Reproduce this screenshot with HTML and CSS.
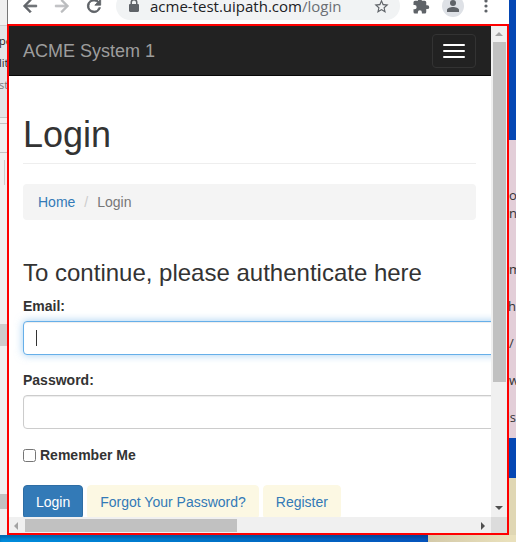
FILE: index.html
```html
<!DOCTYPE html>
<html lang="en">
<head>
<meta charset="utf-8">
<title>ACME System 1 - Login</title>
<link rel="stylesheet" href="styles.css">
</head>
<body>
<div class="desktop">
  <aside class="behind-left">
    <div class="ribbon"><p class="dark">pe</p><p class="dark">lit</p><p>st</p></div>
    <div class="bar"></div>
    <div class="pane tools"></div>
    <div class="pane tall"><i></i></div>
    <div class="thumb"></div>
    <div class="pane lower"></div>
    <div class="thumb small"></div>
    <div class="pane rest"></div>
  </aside>

  <div class="window">
    <header class="toolbar">
      <button class="tool bold" aria-label="Back"><svg width="20" height="20" viewBox="0 0 24 24"><path d="M20 11H7.8l5.600-5.600L12 4l-8 8 8 8 1.400-1.400L7.800 13H20z"/></svg></button>
      <button class="tool bold faded" aria-label="Forward"><svg width="20" height="20" viewBox="0 0 24 24"><path d="M4 11h12.200l-5.600-5.600L12 4l8 8-8 8-1.400-1.400 5.600-5.600H4z"/></svg></button>
      <button class="tool bold" aria-label="Reload"><svg width="20" height="20" viewBox="0 0 24 24"><path d="M17.650 6.350A8 8 0 1 0 19.730 14h-2.080A6 6 0 1 1 12 6c1.660 0 3.140.69 4.220 1.780L13 11h7V4z"/></svg></button>
      <div class="address">
        <svg width="12" height="16" viewBox="0 0 12 16"><path d="M2.500 6V4.500a3.500 3.500 0 0 1 7 0V6h.3c.7 0 1.200.5 1.200 1.200v5.600c0 .7-.5 1.200-1.200 1.200H2.200C1.500 14 1 13.500 1 12.800V7.200C1 6.500 1.500 6 2.200 6zM4 6h4V4.500a2 2 0 0 0-4 0z"/></svg>
        <span class="url">acme-test.uipath.com<span>/login</span></span>
        <button class="tool" aria-label="Bookmark"><svg width="17" height="17" viewBox="0 0 24 24"><path d="M22 9.240l-7.190-.62L12 2 9.190 8.630 2 9.240l5.460 4.730L5.820 21 12 17.270 18.180 21l-1.630-7.030zM12 15.400l-3.760 2.270 1-4.280-3.320-2.880 4.380-.38L12 6.100l1.710 4.040 4.380.38-3.320 2.880 1 4.280z"/></svg></button>
      </div>
      <button class="tool" aria-label="Extensions"><svg width="18" height="18" viewBox="0 0 24 24"><path d="M20.500 11H19V7a2 2 0 0 0-2-2h-4V3.500a2.500 2.500 0 0 0-5 0V5H4a2 2 0 0 0-2 2v3.800h1.500a2.700 2.700 0 0 1 0 5.400H2V20a2 2 0 0 0 2 2h3.800v-1.500a2.700 2.700 0 0 1 5.400 0V22H17a2 2 0 0 0 2-2v-4h1.500a2.500 2.500 0 0 0 0-5z"/></svg></button>
      <button class="tool" aria-label="Profile"><svg width="22" height="22" viewBox="0 0 22 22"><circle cx="11" cy="11" r="11" fill="#dee1e6"/><circle cx="11" cy="8" r="3"/><path d="M5 17v-2c0-2 3.500-3 6-3s6 1 6 3v2z"/></svg></button>
      <button class="tool" aria-label="Menu"><svg width="20" height="20" viewBox="0 0 20 20"><circle cx="10" cy="5" r="1.600"/><circle cx="10" cy="10" r="1.600"/><circle cx="10" cy="15" r="1.600"/></svg></button>
    </header>

    <div class="viewport">
      <div class="page">
        <nav class="navbar">
          <a class="brand" href="#">ACME System 1</a>
          <button class="toggle" aria-label="Toggle navigation"><i></i><i></i><i></i></button>
        </nav>
        <main class="container">
          <h1>Login</h1>
          <ol class="breadcrumb"><li><a href="#">Home</a></li><li>Login</li></ol>
          <h3>To continue, please authenticate here</h3>
          <form>
            <div class="group">
              <label for="email">Email:</label>
              <input class="field focused" id="email" type="email">
            </div>
            <div class="group">
              <label for="password">Password:</label>
              <input class="field" id="password" type="password">
            </div>
            <div class="remember"><input id="remember" type="checkbox"><label for="remember">Remember Me</label></div>
            <div class="actions">
              <button class="btn primary" type="button">Login</button>
              <a class="btn" href="#">Forgot Your Password?</a>
              <a class="btn" href="#">Register</a>
            </div>
          </form>
        </main>
      </div>
      <div class="scroll vertical">
        <svg width="16" height="16" viewBox="0 0 16 16" fill="#a3a3a3"><path d="M4 10l4-4 4 4z"/></svg>
        <div class="grip"></div><div class="track"></div>
        <svg width="16" height="16" viewBox="0 0 16 16" fill="#505050"><path d="M4 5h8l-4 4z"/></svg>
      </div>
      <div class="scroll horizontal">
        <svg width="16" height="16" viewBox="0 0 16 16" fill="#a3a3a3"><path d="M9 5v8L5 9z"/></svg>
        <div class="grip"></div><div class="track"></div>
        <svg width="16" height="16" viewBox="0 0 16 16" fill="#505050"><path d="M6 5v8l4-4z"/></svg>
      </div>
      <div class="corner"></div>
    </div>
  </div>

  <aside class="behind-right">
    <div class="blue top"></div>
    <div class="note"><p>o</p><p>n</p><p class="spaced">m</p><p class="near end">sh</p><p class="near">/</p><p class="near">w</p><p class="near end">ds</p></div>
    <div class="blue mid"></div>
    <div class="cream"></div>
  </aside>
  <div class="floor"><div class="water"></div><div class="cream"></div></div>
</div>
</body>
</html>
```
FILE: styles.css
```css
* { box-sizing: border-box; }

body {
  margin: 0;
  background: #fff;
  color: #333;
  font: 14px/20px "Liberation Sans", Arial, sans-serif;
}

h1, h3, p, ol { margin: 0; padding: 0; }
button { margin: 0; padding: 0; border: 0; background: none; font: inherit; }
a { color: #337ab7; text-decoration: none; }
svg { display: block; flex: none; }

.desktop {
  display: grid;
  grid-template-columns: 7px minmax(0, 1fr) 7px;
  grid-template-rows: minmax(0, 1fr) 7px;
  height: calc(100vh - 17px);
  overflow: hidden;
}

/* Windows behind the browser */
.behind-left, .behind-right {
  display: flex;
  flex-direction: column;
  min-width: 0;
  overflow: hidden;
  font: 13px/18px "Open Sans", sans-serif;
}
.behind-left { background: #f0f0f0; }
.ribbon {
  height: 117px;
  padding-top: 32px;
  background: linear-gradient(#f0f0f0 25px, #ccc 25px, #ccc 26px, #e3e4e6 26px);
  color: #777;
  font-size: 11px;
}
.ribbon p { height: 22px; margin-left: -1px; }
.ribbon .dark { color: #222; }
.bar { height: 7px; border: solid #c4c4c4; border-width: 1px 0; }
.tools { height: 29px; border-bottom: 1px solid #c4c4c4; }
.tall { height: 171px; padding: 7px 0 0 4px; }
.tall i { display: block; width: 1px; height: 25px; background: #ccc; }
.thumb { height: 22px; background: #cdcdcd; }
.lower { height: 148px; }
.thumb.small { height: 15px; background: #c1c1c1; }
.rest { flex: 1; }

.blue { background: #0547b4; }
.blue.top { height: 140px; }
.blue.mid { height: 40px; }
.note { height: 298px; padding-top: 46px; background: #e3ced8; color: #333; }
.note p { display: flex; height: 18px; }
.note .spaced { margin-top: 38px; }
.note .near { margin-top: 19px; }
.note .end { justify-content: flex-end; }
.cream { flex: 1; background: linear-gradient(90deg, #d3c9a9, #e9e0bb 80px); }
.floor { grid-column: 1 / -1; display: flex; }
.water { width: 83%; background: linear-gradient(90deg, #008ddd, #0073c8 50%, #0554bd); box-shadow: inset 0 3px 3px rgba(0, 30, 80, .3); }
.behind-right .cream { background: #e0d7b4; }

/* Browser window */
.window { display: flex; flex-direction: column; min-width: 0; min-height: 0; }
.toolbar {
  display: flex;
  align-items: center;
  flex: none;
  gap: 12px;
  height: 36px;
  margin-top: -12px;
  padding: 0 13px 0 12px;
  border-left: 1px solid #777;
  background: #fff;
}
.tool { fill: #5f6368; }
.tool.bold { stroke: #5f6368; stroke-width: 1px; }
.tool.faded { fill: #babcbe; stroke: #babcbe; }
.address {
  display: flex;
  flex: 1;
  align-items: center;
  gap: 10px;
  min-width: 0;
  height: 28px;
  padding: 0 10px 0 12px;
  border-radius: 14px;
  background: #f1f3f4;
  fill: #5f6368;
}
.url {
  flex: 1;
  color: #202124;
  font: 15px/20px "Open Sans", sans-serif;
  white-space: nowrap;
}
.url span { color: #6b6f74; }

.viewport {
  display: grid;
  grid-template-columns: minmax(0, 1fr) 16px;
  grid-template-rows: minmax(0, 1fr) 16px;
  flex: 1;
  min-height: 0;
  border: 2px solid #f00;
  background: #fff;
}
.page { overflow: hidden; }
.scroll { display: flex; background: #f0f0f0; }
.vertical { flex-direction: column; }
.vertical .grip { flex: 74; margin: 0 1px 0 2px; }
.vertical .track { flex: 26; }
.horizontal .grip { flex: 47; margin: 2px 0 1px; }
.horizontal .track { flex: 53; }
.grip { background: #c1c1c1; }
.corner { background: #dcdcdc; }

/* Login page */
.navbar {
  display: flex;
  align-items: center;
  justify-content: space-between;
  height: 50px;
  padding: 0 15px 0 14px;
  border-bottom: 1px solid #080808;
  background: #222;
}
.brand { color: #9d9d9d; font-size: 18px; }
.toggle {
  display: flex;
  flex-direction: column;
  gap: 4px;
  padding: 9px 10px;
  border: 1px solid #333;
  border-radius: 4px;
}
.toggle i { width: 22px; height: 2px; border-radius: 1px; background: #fff; }
.container { padding: 39px 15px 0 14px; }
h1 {
  padding-bottom: 8px;
  border-bottom: 1px solid #eee;
  font-size: 36px;
  font-weight: 500;
  line-height: 40px;
}
.breadcrumb {
  display: flex;
  margin: 20px 0 40px;
  padding: 8px 15px;
  border-radius: 4px;
  background: #f4f4f4;
  color: #777;
  list-style: none;
}
.breadcrumb li + li::before { content: "/"; padding: 0 9px; color: #ccc; }
h3 { margin-bottom: 10px; font-size: 24px; font-weight: 500; line-height: 26px; }
label { font-weight: 700; }
.group { margin: 0 -30px 15px 0; }
.group label { display: block; margin-bottom: 5px; }
.field {
  display: block;
  width: 100%;
  height: 34px;
  padding: 6px 12px;
  border: 1px solid #ccc;
  border-radius: 4px;
  background: #fff;
  box-shadow: inset 0 1px 1px rgba(0, 0, 0, .075);
  font: inherit;
}
.field.focused {
  border-color: #66afe9;
  background: linear-gradient(#333, #333) 12px center / 1px 16px no-repeat #fff;
  box-shadow: inset 0 1px 1px rgba(0, 0, 0, .075), 0 0 8px rgba(102, 175, 233, .6);
}
.remember { display: flex; align-items: center; gap: 4px; margin: 16px 0 20px; }
.remember input { width: 13px; height: 13px; margin: 0; }
.actions { display: flex; gap: 4px; }
.btn {
  padding: 6px 12px;
  border: 1px solid #fcf8e3;
  border-radius: 4px;
  background: #fcf8e3;
  color: #337ab7;
  white-space: nowrap;
}
.btn.primary { border-color: #2e6da4; background: #337ab7; color: #fff; }
```
